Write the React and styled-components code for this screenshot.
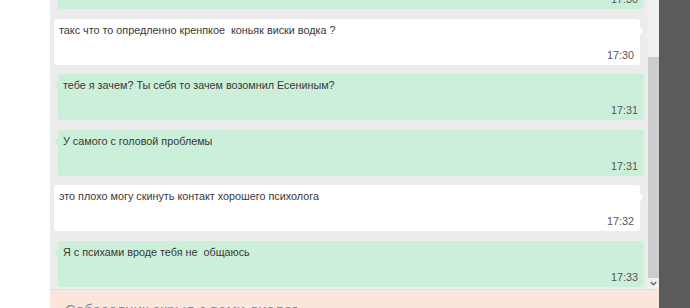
import React from 'react'
import styled, { createGlobalStyle } from 'styled-components'

const GlobalStyle = createGlobalStyle`
  html, body {
    margin: 0;
    padding: 0;
    background: #ffffff;
    overflow: hidden;
  }
`

const Page = styled.div`
  display: flex;
  height: 308px;
  overflow: hidden;
  font-family: 'Liberation Sans', Arial, sans-serif;
`

const Gutter = styled.div`
  width: 50px;
  flex-shrink: 0;
  background: #ffffff;
`

const ChatColumn = styled.div`
  width: 609px;
  flex-shrink: 0;
  display: flex;
  flex-direction: column;
`

const ScrollArea = styled.div`
  height: 289px;
  flex-shrink: 0;
  display: flex;
  background: #ececec;
`

const Messages = styled.div`
  flex: 1;
  overflow: hidden;
  display: flex;
  flex-direction: column;
  justify-content: flex-end;
  gap: 9.6px;
  padding-bottom: 2px;
`

const Bubble = styled.div`
  position: relative;
  flex-shrink: 0;
  height: 46px;
  box-sizing: border-box;
  padding: 4px 6px 3px 5px;
  border-radius: 3px;
  background: ${p => (p.$mine ? '#cbefd8' : '#ffffff')};
  margin: ${p => (p.$mine ? '0 3px 0 8px' : '0 7px 0 4px')};

  &::after {
    content: '';
    position: absolute;
    top: 8px;
    width: 0;
    height: 0;
    border-top: 4px solid transparent;
    border-bottom: 4px solid transparent;
    ${p =>
      p.$mine
        ? 'left: -4px; border-right: 4px solid #cbefd8;'
        : 'right: -3px; border-left: 3px solid #ffffff;'}
  }
`

const Text = styled.div`
  font-size: 10.8px;
  line-height: 14px;
  color: #383838;
  white-space: pre;
`

const Time = styled.div`
  margin-top: 11px;
  font-size: 10.8px;
  line-height: 14px;
  color: #555555;
  text-align: right;
`

const Track = styled.div`
  width: 12px;
  flex-shrink: 0;
  display: flex;
  flex-direction: column;
  background: #f0f0f0;
`

const TrackSpace = styled.div`
  height: 57px;
  flex-shrink: 0;
`

const Thumb = styled.div`
  flex: 1;
  margin-left: 1px;
  background: #cdcdcd;
`

const ArrowButton = styled.div`
  height: 11px;
  flex-shrink: 0;
  display: flex;
  align-items: center;
  justify-content: center;
  padding-left: 1px;
`

const Footer = styled.div`
  flex: 1;
  background: #fbe6de;
  border-top: 1px solid #e6dcd6;
  padding: 11px 15px;
  font-size: 15px;
  line-height: 18px;
  color: #8a8a8a;
  white-space: nowrap;
`

const Side = styled.div`
  flex: 1;
  background: #5b5b5b;
`

const messages = [
  { mine: true, text: 'ну и ладно', time: '17:30' },
  { mine: false, text: 'такс что то опредленно кренпкое  коньяк виски водка ?', time: '17:30' },
  { mine: true, text: 'тебе я зачем? Ты себя то зачем возомнил Есениным?', time: '17:31' },
  { mine: true, text: 'У самого с головой проблемы', time: '17:31' },
  { mine: false, text: 'это плохо могу скинуть контакт хорошего психолога', time: '17:32' },
  { mine: true, text: 'Я с психами вроде тебя не  общаюсь', time: '17:33' },
]

const App = () => {
  return (
    <Page>
      <GlobalStyle />
      <Gutter />
      <ChatColumn>
        <ScrollArea>
          <Messages>
            {messages.map((m, i) => (
              <Bubble key={i} $mine={m.mine}>
                <Text>{m.text}</Text>
                <Time>{m.time}</Time>
              </Bubble>
            ))}
          </Messages>
          <Track>
            <TrackSpace />
            <Thumb />
            <ArrowButton>
              <svg width="7" height="5" viewBox="0 0 7 5">
                <polyline points="0.8,1 3.5,3.8 6.2,1" fill="none" stroke="#606060" strokeWidth="1.3" />
              </svg>
            </ArrowButton>
          </Track>
        </ScrollArea>
        <Footer>Собеседник скрыл с вами диалог</Footer>
      </ChatColumn>
      <Side />
    </Page>
  )
}

export default App
